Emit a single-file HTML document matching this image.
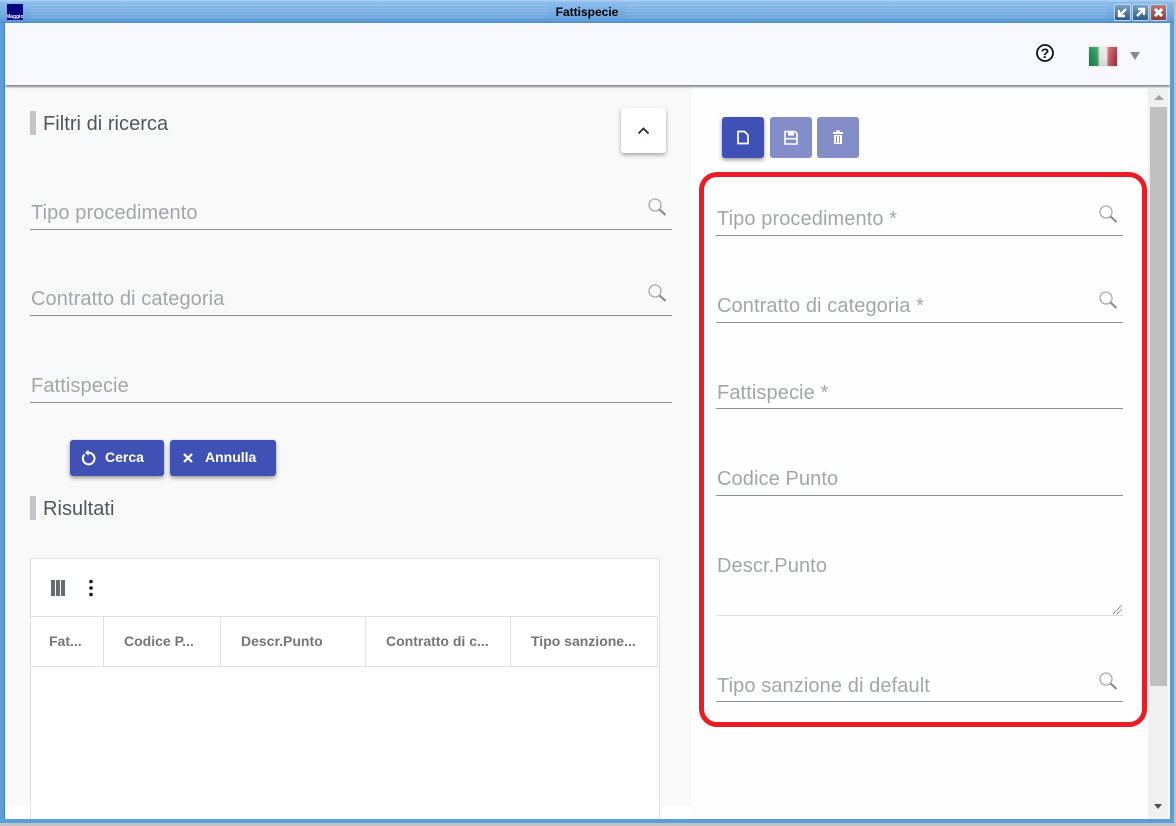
<!DOCTYPE html>
<html lang="it">
<head>
<meta charset="utf-8">
<title>Fattispecie</title>
<style>
html,body{margin:0;padding:0;width:1176px;height:826px;overflow:hidden;background:#bcc4c9;font-family:"Liberation Sans",sans-serif}
.a{position:absolute}
#win{position:absolute;left:0;top:0;width:1174px;height:823px;background:#5b9dd9;overflow:hidden}
#title{left:0;top:0;width:1174px;height:23px;background:linear-gradient(#a9cdf0 0,#a9cdf0 1px,#8bbdec 2px,#6fa8df 16px,#5b97d4 22px,#3f7fbd 23px)}
.stripes{top:5px;height:13px;background:repeating-linear-gradient(rgba(255,255,255,.16) 0,rgba(255,255,255,.16) 1px,transparent 1px,transparent 3px)}
#ttl{left:548px;top:3px;width:78px;height:20px;text-align:center;font-size:12px;font-weight:bold;color:#000;line-height:19px}
.wb{top:4px;width:15px;height:15px;border:1px solid #b9d6ef;border-radius:2px;background:linear-gradient(#7aa0c4,#2b5a85)}
#content{left:5px;top:23px;width:1165px;height:796px;background:#fff;overflow:hidden}
#left{left:0;top:62px;width:686px;height:721px;background:#f9f9f9}
#top{left:0;top:0;width:1165px;height:62px;background:#f8f9fe;box-shadow:0 2px 2px #888}
.bar{width:6px;height:24px;background:#c1c6ca}
.h{font-size:20px;color:#50565e;line-height:24px;letter-spacing:.04px;margin-top:1px}
.lbl{font-size:20px;color:#a3a6a9;line-height:24px;letter-spacing:.1px;white-space:nowrap;margin-top:1px}
.ln{height:1px;background:#8e8e8e}
.btn{background:#3f51b5;border-radius:3px;box-shadow:0 2px 4px rgba(0,0,0,.4);color:#fff;font-size:14px;font-weight:bold;line-height:34px}
.tb{width:42px;height:41px;border-radius:3px;background:#858dc8}
.th{top:58px;height:49px;font-size:14px;font-weight:bold;color:#757575;line-height:49px;white-space:nowrap}
.vl{width:1px;background:#e0e0e0}
</style>
</head>
<body>
<div id="win">
  <div class="a" id="title"></div>
  <div class="a stripes" style="left:31px;width:517px"></div>
  <div class="a stripes" style="left:626px;width:481px"></div>
  <div class="a" style="left:7px;top:4px;width:16px;height:16px;background:#04047e;overflow:hidden"><div class="a" style="left:-1px;top:10px;width:18px;text-align:center;font-size:5px;line-height:6px;font-weight:bold;color:#fff;white-space:nowrap">Maggioli</div></div>
  <div class="a" id="ttl">Fattispecie</div>
  <div class="a wb" style="left:1114px"><svg width="15" height="15" viewBox="0 0 15 15"><path d="M11 4 5 10M4 5v6h6" stroke="#fff" stroke-width="2.4" fill="none"/></svg></div>
  <div class="a wb" style="left:1132px"><svg width="15" height="15" viewBox="0 0 15 15"><path d="M4 11 10 5M5 4h6v6" stroke="#fff" stroke-width="2.4" fill="none"/></svg></div>
  <div class="a wb" style="left:1150px;background:linear-gradient(#b97c7c,#8c3b3b)"><svg width="15" height="15" viewBox="0 0 15 15"><path d="M4 4 11 11M11 4 4 11" stroke="#fff" stroke-width="3" fill="none"/></svg></div>
  <div class="a" style="left:4px;top:23px;width:1px;height:796px;background:#3f7fbd"></div>

  <div class="a" id="content">
    <div class="a" id="left"></div>
    <div class="a" style="left:686px;top:62px;width:457px;height:734px;background:#fefefe"></div>
    <div class="a" id="top"></div>

    <svg class="a" style="left:1030px;top:20px" width="20" height="20" viewBox="0 0 20 20"><circle cx="10" cy="10" r="8" fill="none" stroke="#111" stroke-width="1.800"/><text x="10" y="15" font-family="Liberation Sans" font-size="14" font-weight="bold" text-anchor="middle" fill="#111">?</text></svg>
    <div class="a" style="left:1084px;top:24px;width:28px;height:19px;background:linear-gradient(rgba(255,255,255,.12),rgba(255,255,255,0) 50%,rgba(0,0,0,.08)),linear-gradient(90deg,#0d8a47 0,#3a9a60 30%,#dfe8e1 38%,#e8e8e8 62%,#c8656d 70%,#a8323c 100%);box-shadow:0 0 1px #bbb"></div>
    <div class="a" style="left:1125px;top:29px;width:0;height:0;border-left:5px solid transparent;border-right:5px solid transparent;border-top:8px solid #8b8b8b"></div>

    <!-- left panel -->
    <div class="a bar" style="left:25px;top:88px"></div>
    <div class="a h" style="left:38px;top:88px">Filtri di ricerca</div>
    <div class="a" style="left:616px;top:85px;width:45px;height:45px;background:#fff;border-radius:3px;box-shadow:0 2px 4px rgba(0,0,0,.35)"><svg width="45" height="45" viewBox="0 0 45 45"><path d="M17.500 25.500 22.500 20.500 27.500 25.500" fill="none" stroke="#1b2733" stroke-width="1.800"/></svg></div>

    <div class="a lbl" style="left:26px;top:177px">Tipo procedimento</div>
    <div class="a ln" style="left:25px;top:206px;width:642px"></div>
    <svg class="a" style="left:642px;top:174px" width="20" height="20" viewBox="0 0 20 20"><circle cx="8" cy="8" r="6" fill="none" stroke="#aaa" stroke-width="1.300"/><path d="M12.500 12.500 18.500 18" stroke="#8a8a8a" stroke-width="2.200"/></svg>

    <div class="a lbl" style="left:26px;top:263px">Contratto di categoria</div>
    <div class="a ln" style="left:25px;top:292px;width:642px"></div>
    <svg class="a" style="left:642px;top:260px" width="20" height="20" viewBox="0 0 20 20"><circle cx="8" cy="8" r="6" fill="none" stroke="#aaa" stroke-width="1.300"/><path d="M12.500 12.500 18.500 18" stroke="#8a8a8a" stroke-width="2.200"/></svg>

    <div class="a lbl" style="left:26px;top:350px">Fattispecie</div>
    <div class="a ln" style="left:25px;top:379px;width:642px"></div>

    <div class="a btn" style="left:65px;top:417px;width:94px;height:36px">
      <svg class="a" style="left:9px;top:9px" width="18" height="18" viewBox="0 0 18 18"><path d="M5.500 5.500A5.800 5.800 0 1 0 9.500 3.700" fill="none" stroke="#fff" stroke-width="2"/><path d="M9.500 .8v6L6 3.800z" fill="#fff"/></svg>
      <span class="a" style="left:35px;top:0">Cerca</span>
    </div>
    <div class="a btn" style="left:165px;top:417px;width:106px;height:36px">
      <svg class="a" style="left:9px;top:9px" width="18" height="18" viewBox="0 0 18 18"><path d="M5 5 13 13M13 5 5 13" stroke="#fff" stroke-width="2.200"/></svg>
      <span class="a" style="left:35px;top:0">Annulla</span>
    </div>

    <div class="a bar" style="left:25px;top:473px"></div>
    <div class="a h" style="left:38px;top:473px">Risultati</div>

    <!-- table -->
    <div class="a" style="left:25px;top:535px;width:628px;height:300px;background:#fff;border:1px solid #e0e0e0">
      <svg class="a" style="left:20px;top:20px" width="16" height="18" viewBox="0 0 16 18"><path d="M0 1h4v16H0zM5 1h4v16H5zM10 1h4v16h-4z" fill="#666c74"/></svg>
      <svg class="a" style="left:55px;top:19px" width="10" height="20" viewBox="0 0 10 20"><circle cx="5" cy="3.500" r="1.800" fill="#111"/><circle cx="5" cy="10" r="1.800" fill="#111"/><circle cx="5" cy="16.500" r="1.800" fill="#111"/></svg>
      <div class="a" style="left:0;top:57px;width:627px;height:1px;background:#e0e0e0"></div>
      <div class="a" style="left:0;top:107px;width:627px;height:1px;background:#e0e0e0"></div>
      <div class="a vl" style="left:72px;top:57px;height:50px"></div>
      <div class="a vl" style="left:189px;top:57px;height:50px"></div>
      <div class="a vl" style="left:334px;top:57px;height:50px"></div>
      <div class="a vl" style="left:479px;top:57px;height:50px"></div>
      <div class="a vl" style="left:626px;top:57px;height:50px"></div>
      <div class="a th" style="left:18px">Fat...</div>
      <div class="a th" style="left:93px">Codice P...</div>
      <div class="a th" style="left:210px">Descr.Punto</div>
      <div class="a th" style="left:355px">Contratto di c...</div>
      <div class="a th" style="left:500px">Tipo sanzione...</div>
    </div>

    <!-- right toolbar -->
    <div class="a tb" style="left:717px;top:94px;background:#3f51b5;box-shadow:0 2px 4px rgba(0,0,0,.4)"><svg width="42" height="41" viewBox="0 0 42 41"><path d="M16 14.500h6.500l3.500 3.500v8.500H16z" fill="none" stroke="#fff" stroke-width="1.700"/></svg></div>
    <div class="a tb" style="left:765px;top:94px"><svg width="42" height="41" viewBox="0 0 42 41"><path d="M15 14.500h10l2 2v10.500H15z" fill="none" stroke="#fff" stroke-width="1.600"/><path d="M18 14h6v4.500h-6zM15 21h12v1.500H15z" fill="#fff"/></svg></div>
    <div class="a tb" style="left:812px;top:94px"><svg width="42" height="41" viewBox="0 0 42 41"><path d="M16 15h10v2H16zM19 13.500h4V15h-4zM17 18h8v9h-8z" fill="#fff"/><path d="M19.500 19v7M22.500 19v7" stroke="#858dc8" stroke-width="1"/></svg></div>

    <!-- right form -->
    <div class="a lbl" style="left:712px;top:183px">Tipo procedimento *</div>
    <div class="a ln" style="left:711px;top:212px;width:407px"></div>
    <svg class="a" style="left:1093px;top:181px" width="20" height="20" viewBox="0 0 20 20"><circle cx="8" cy="8" r="6" fill="none" stroke="#aaa" stroke-width="1.300"/><path d="M12.500 12.500 18.500 18" stroke="#8a8a8a" stroke-width="2.200"/></svg>

    <div class="a lbl" style="left:712px;top:270px">Contratto di categoria *</div>
    <div class="a ln" style="left:711px;top:299px;width:407px"></div>
    <svg class="a" style="left:1093px;top:267px" width="20" height="20" viewBox="0 0 20 20"><circle cx="8" cy="8" r="6" fill="none" stroke="#aaa" stroke-width="1.300"/><path d="M12.500 12.500 18.500 18" stroke="#8a8a8a" stroke-width="2.200"/></svg>

    <div class="a lbl" style="left:712px;top:357px">Fattispecie *</div>
    <div class="a ln" style="left:711px;top:385px;width:407px"></div>

    <div class="a lbl" style="left:712px;top:443px">Codice Punto</div>
    <div class="a ln" style="left:711px;top:472px;width:407px"></div>

    <div class="a lbl" style="left:712px;top:530px">Descr.Punto</div>
    <div class="a" style="left:711px;top:592px;width:407px;height:1px;background:#e0e0e0"></div>
    <svg class="a" style="left:1107px;top:581px" width="11" height="10" viewBox="0 0 11 10"><path d="M1 10 10 1M5 10 10 5" stroke="#666" stroke-width="1" stroke-dasharray="1.200 .6"/></svg>

    <div class="a lbl" style="left:712px;top:650px">Tipo sanzione di default</div>
    <div class="a ln" style="left:711px;top:678px;width:407px"></div>
    <svg class="a" style="left:1093px;top:648px" width="20" height="20" viewBox="0 0 20 20"><circle cx="8" cy="8" r="6" fill="none" stroke="#aaa" stroke-width="1.300"/><path d="M12.500 12.500 18.500 18" stroke="#8a8a8a" stroke-width="2.200"/></svg>

    <!-- red outline -->
    <div class="a" style="left:694px;top:149px;width:438px;height:545px;border:5px solid #ed1c24;border-radius:18px"></div>

    <!-- scrollbar -->
    <div class="a" style="left:1143px;top:65px;width:20px;height:731px;background:#f0f0f0"></div>
    <div class="a" style="left:1145px;top:84px;width:17px;height:579px;background:#c0c0c0"></div>
    <div class="a" style="left:1149px;top:72px;width:0;height:0;border-left:5px solid transparent;border-right:5px solid transparent;border-bottom:5px solid #a0a0a0"></div>
    <div class="a" style="left:1149px;top:781px;width:0;height:0;border-left:4.500px solid transparent;border-right:4.500px solid transparent;border-top:5px solid #505050"></div>
  </div>
</div>
</body>
</html>
